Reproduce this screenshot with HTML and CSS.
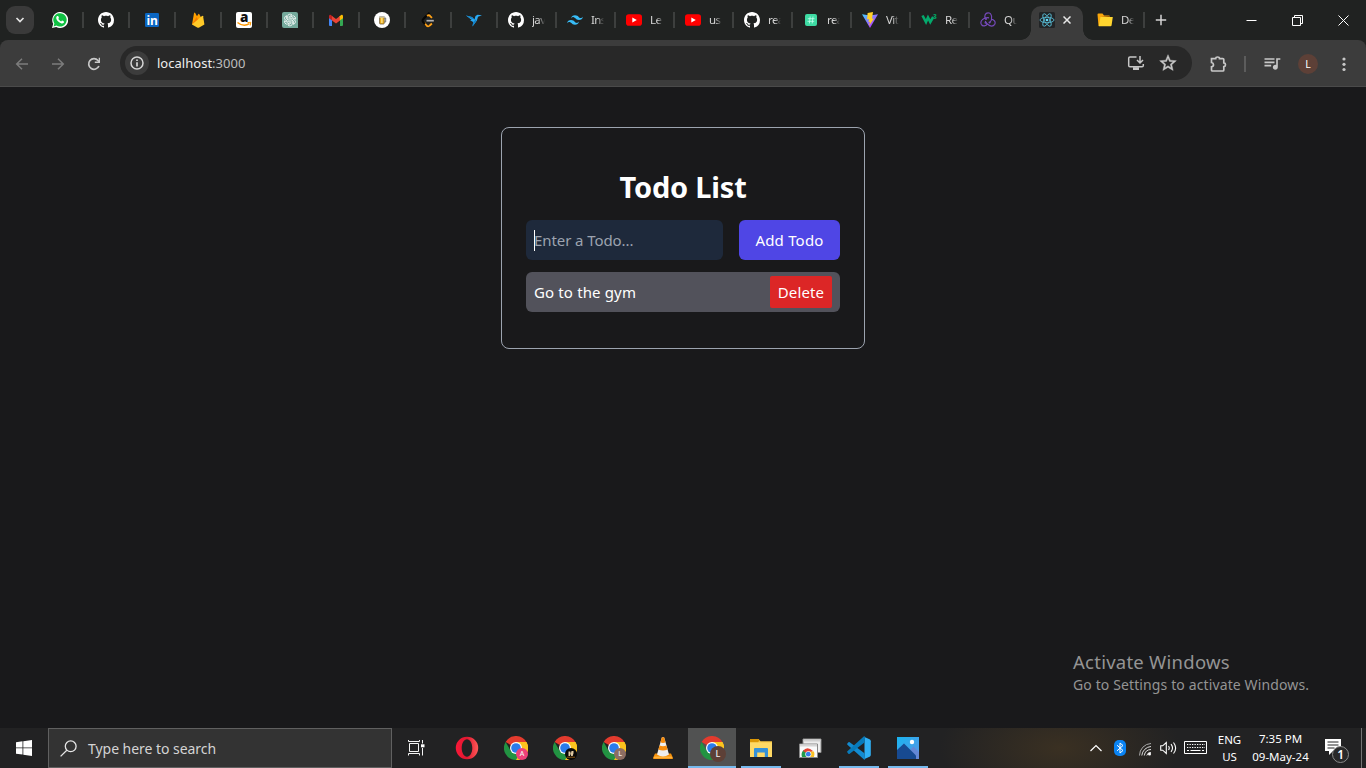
FILE: index.html
```html
<!DOCTYPE html>
<html lang="en">
<head>
<meta charset="utf-8">
<title>Todo List</title>
<link rel="stylesheet" href="styles.css">
</head>
<body>
<svg class="defs" width="0" height="0">
  <symbol id="github" viewBox="0 0 16 16"><path fill="#fff" d="M8 0C3.58 0 0 3.58 0 8c0 3.54 2.29 6.53 5.47 7.59.4.07.55-.17.55-.38 0-.19-.01-.82-.01-1.49-2.01.37-2.53-.49-2.69-.94-.09-.23-.48-.94-.82-1.13-.28-.15-.68-.52-.01-.53.63-.01 1.08.58 1.23.82.72 1.21 1.87.87 2.33.66.07-.52.28-.87.51-1.07-1.78-.2-3.64-.89-3.64-3.95 0-.87.31-1.59.82-2.15-.08-.2-.36-1.02.08-2.12 0 0 .67-.21 2.2.82.64-.18 1.32-.27 2-.27s1.36.09 2 .27c1.53-1.04 2.2-.82 2.2-.82.44 1.1.16 1.92.08 2.12.51.56.82 1.27.82 2.15 0 3.07-1.87 3.75-3.65 3.95.29.25.54.73.54 1.48 0 1.07-.01 1.93-.01 2.2 0 .21.15.46.55.38A8.01 8.01 0 0 0 16 8c0-4.42-3.58-8-8-8z"/></symbol>
  <symbol id="youtube" viewBox="0 0 16 16"><rect y="2.3" width="16" height="11.4" rx="2.8" fill="#f00"/><path d="M6.3 5.4v5.2L10.8 8z" fill="#fff"/></symbol>
  <symbol id="chrome" viewBox="0 0 24 24">
    <path d="M12 12 1.6 6A12 12 0 0 1 22.4 6z" fill="#e33b2e"/>
    <path d="M12 12 22.4 6A12 12 0 0 1 12 24z" fill="#fcc31e"/>
    <path d="M12 6h10.4A12 12 0 0 1 12 24l5.2-9z" fill="#fcc31e"/>
    <path d="M1.6 6 6.8 15 12 18l5.2-3L12 24A12 12 0 0 1 1.6 6z" fill="#229342"/>
    <circle cx="12" cy="12" r="6" fill="#fff"/><circle cx="12" cy="12" r="4.8" fill="#2a7bec"/>
  </symbol>
</svg>

<header class="tabstrip">
  <button class="tab-search"><svg width="10" height="10" viewBox="0 0 10 10"><path d="M1.5 3 5 6.5 8.5 3" fill="none" stroke="#e3e3e3" stroke-width="1.7"/></svg></button>
  <div class="tab"><svg viewBox="0 0 16 16"><path d="M0 16 1.2 11.8A8 8 0 1 1 4.2 14.9z" fill="#fff"/><path d="m1.6 14.4.8-2.8A6.7 6.7 0 1 1 4.5 13.6z" fill="#10c143"/><path d="M5.2 4.1c.4-.3.9-.2 1.1.2l.6 1.4c.1.4-.4.9-.6 1.1.7 1.3 1.6 2.1 2.9 2.7.4-.4.7-1 1.1-.9l1.6.8c.3.2.1.9-.2 1.3-.6.7-1.6.9-2.6.5-2.2-.7-3.8-2.2-4.7-4.2-.4-1.1-.1-2.3.8-2.9z" fill="#fff"/></svg></div>
  <div class="tab"><svg><use href="#github"/></svg></div>
  <div class="tab"><svg viewBox="0 0 16 16"><rect x="1" y="1" width="14" height="14" rx="1.2" fill="#0a66c2"/><text x="2.6" y="12.5" font-size="12" class="glyph in" fill="#fff">in</text></svg></div>
  <div class="tab"><svg viewBox="0 0 16 16"><path d="M2 12.5 4 1.2Q4.5.1 5.2 1L7 4.3 8.2 2.2Q8.8 1.3 9.3 2.2L13 9z" fill="#ffa000"/><path d="M2 12.5 6.5 5 9.5 10z" fill="#f57c00"/><path d="M2 12.5 12 4q.8-.6 1.1.3l1.3 8.2-5.2 3.1q-1 .5-2 0z" fill="#ffca28"/></svg></div>
  <div class="tab"><svg viewBox="0 0 16 16"><rect width="16" height="16" rx="2" fill="#fff"/><text x="4" y="10.2" font-size="13.5" class="glyph" fill="#111">a</text><path d="M1.5 10.5q6 4.8 12 1.2" fill="none" stroke="#f90" stroke-width="1.5"/><path d="m11.5 10.6 3.3-.3-.6 3.2" fill="none" stroke="#f90"/></svg></div>
  <div class="tab"><svg viewBox="0 0 16 16"><path d="M2 0h12a2 2 0 0 1 2 2v14H2a2 2 0 0 1-2-2V2a2 2 0 0 1 2-2z" fill="#74aa9c"/><g fill="none" stroke="#fff" stroke-width=".75"><path id="petal" d="M5.7 6.8V4.1Q5.8 2.2 8 2.1q1.2 0 2 .8L7.2 4.7v3"/><use href="#petal" transform="rotate(60 8 8)"/><use href="#petal" transform="rotate(120 8 8)"/><use href="#petal" transform="rotate(180 8 8)"/><use href="#petal" transform="rotate(240 8 8)"/><use href="#petal" transform="rotate(300 8 8)"/></g></svg></div>
  <div class="tab"><svg viewBox="0 0 16 16"><path d="M1 4v9q0 1 1 1h2V6z" fill="#4285f4"/><path d="M15 4v9q0 1-1 1h-2V6z" fill="#34a853"/><path d="M1 4.2v2L4.2 8.5V4.3L3 3Q1.2 2.2 1 4.2z" fill="#c5221f"/><path d="M4 4 8 7l4-3v4.5l-4 3-4-3z" fill="#ea4335"/><path d="M15 4.2v2l-3.2 2.3V4.3L13 3q1.8-.8 2 1.2z" fill="#fbbc04"/></svg></div>
  <div class="tab"><svg viewBox="0 0 16 16"><circle cx="8" cy="8" r="8" fill="#fff"/><path d="M10.2 6h1.5v4h-1.500" fill="none" stroke="#777"/><rect x="5.600" y="4.500" width="4.600" height="7.500" rx=".7" fill="#f4b41a" stroke="#695b43" stroke-width=".8"/><path d="M5 4.200h6v1.500H5z" fill="#c9c9c0"/><path d="M7.900 6v5" stroke="#fff2b0"/></svg></div>
  <div class="tab"><svg viewBox="0 0 16 16"><path d="m9.500.7-6.300 6.500q-1.400 1.500 0 3L6.500 14" fill="none" stroke="#070707" stroke-width="1.900"/><path d="m6.500 3.800 1.600-.5q1.400-.2 2.300 1l1.600 1.500M4 10.200l2.500 3.300q1.700 1.700 3.300 0l2.100-2" fill="none" stroke="#ffa116" stroke-width="1.800"/><path d="M3.200 7.200 6.800 3.600M3.200 10l1.800 2" stroke="#070707" stroke-width="1.900"/><path d="M6.500 8.700h7.300" stroke="#b3b3b3" stroke-width="1.700"/></svg></div>
  <div class="tab"><svg viewBox="0 0 16 16"><path d="M0 3.500 6 5l2.500 2.500L9.500 4l2-1.200L16 3.200l-4 1.500-1.200 4L6.500 14.500l.7-4.500L4 8.300 5.800 8z" fill="#29aaf4"/><path d="M0 3.500 6 5l2.500 2.500L5 6.500zM7.200 10l3-3-.2 2.500-3.500 5z" fill="#1482c8"/></svg></div>
  <div class="tab wide"><svg><use href="#github"/></svg><span>jav</span></div>
  <div class="tab wide"><svg viewBox="0 0 24 24"><path fill="#38bdf8" d="M12.001 4.800c-3.200 0-5.200 1.600-6 4.800 1.200-1.600 2.600-2.200 4.200-1.800.913.228 1.565.890 2.288 1.624C13.666 10.618 15.027 12 18.001 12c3.200 0 5.200-1.600 6-4.800-1.200 1.600-2.600 2.200-4.200 1.800-.913-.228-1.565-.890-2.288-1.624C16.337 6.182 14.976 4.800 12.001 4.800zm-6 7.200c-3.200 0-5.200 1.600-6 4.800 1.200-1.600 2.600-2.200 4.200-1.800.913.228 1.565.890 2.288 1.624 1.177 1.194 2.538 2.576 5.512 2.576 3.200 0 5.200-1.600 6-4.800-1.200 1.600-2.600 2.200-4.200 1.800-.913-.228-1.565-.890-2.288-1.624C10.337 13.382 8.976 12 6.001 12z"/></svg><span>Ins</span></div>
  <div class="tab wide"><svg><use href="#youtube"/></svg><span>Le</span></div>
  <div class="tab wide"><svg><use href="#youtube"/></svg><span>us</span></div>
  <div class="tab wide"><svg><use href="#github"/></svg><span>rea</span></div>
  <div class="tab wide"><svg viewBox="0 0 16 16"><rect x="2" y="2" width="12" height="12" rx="2" fill="#3edba3"/><path d="m7.200 4.500-.8 7M10 4.500l-.8 7M4.800 6.700h6.700M4.500 9.300h6.700" stroke="#c5fff0" stroke-width=".8" fill="none"/></svg><span>rea</span></div>
  <div class="tab wide"><svg viewBox="0 0 16 16"><defs><linearGradient id="vite" x2="1" y2="1"><stop stop-color="#41d1ff"/><stop offset=".7" stop-color="#a94afe"/><stop offset="1" stop-color="#bd34fe"/></linearGradient></defs><path d="M0 2.300 8 3.500l8-1.200L8 16z" fill="url(#vite)"/><path d="m11 0-5.400 1-.5 6.500 2-.4-.6 3 1.500-.4-1 4L12 6.500l-2 .3z" fill="#ffd028"/></svg><span>Vit</span></div>
  <div class="tab wide"><svg viewBox="0 0 16 16"><path d="M1.500 3.500 5 10l2-4.500L9.300 10l2.900-5" fill="none" stroke="#04aa6d" stroke-width="2.600"/><text x="12" y="7" font-size="6.500" class="glyph" fill="#05995f">3</text></svg><span>Re</span></div>
  <div class="tab wide last"><svg viewBox="0 0 16 16"><g fill="none" stroke="#764abc" stroke-width="1.150"><path id="loop" d="M9.800 10.700C13 7 12 1 8 .8 5.200.8 4 4 5.500 6.300"/><use href="#loop" transform="rotate(120 8 8.500)"/><use href="#loop" transform="rotate(240 8 8.500)"/></g><g fill="#764abc"><circle cx="6" cy="7" r="1"/><circle cx="9.500" cy="10.500" r="1"/><circle cx="5.500" cy="10.800" r="1"/></g></svg><span>Qu</span></div>
  <div class="tab active"><svg viewBox="0 0 16 16"><rect width="16" height="16" rx="1.500" fill="#222426"/><g fill="none" stroke="#58bed8" stroke-width=".85"><ellipse cx="8" cy="8" rx="7" ry="2.700"/><ellipse cx="8" cy="8" rx="7" ry="2.700" transform="rotate(60 8 8)"/><ellipse cx="8" cy="8" rx="7" ry="2.700" transform="rotate(120 8 8)"/></g><circle cx="8" cy="8" r="1.350" fill="#61dafb"/></svg><svg class="close" viewBox="0 0 8 8"><path d="m.5.500 7 7m0-7-7 7" stroke="#e8e8e8" stroke-width="1.500"/></svg></div>
  <div class="tab wide folder"><svg viewBox="0 0 16 16"><path d="M.5 2.500q0-1 1-1h4l1.500 2h5.500V14h-11z" fill="#f9a60b"/><path d="M12.500 4v10h-9l1-9z" fill="#8b5009"/><path d="M3.500 5h12.300l-1.200 8.200q-.1 1-1.100 1H1.800z" fill="#ffd62f"/></svg><span>De</span></div>
  <button class="new-tab"><svg width="12" height="12" viewBox="0 0 12 12"><path d="M6 .8v10.400M.8 6h10.400" stroke="#d4d4d4" stroke-width="1.500"/></svg></button>
  <div class="window-controls">
    <svg width="11" height="11" viewBox="0 0 11 11"><path d="M.5 5.500h10" stroke="#fff"/></svg>
    <svg width="11" height="11" viewBox="0 0 11 11"><path d="M.5 2.500h8v8h-8zM2.500 2.500v-2h8v8h-2" fill="none" stroke="#fff"/></svg>
    <svg width="11" height="11" viewBox="0 0 11 11"><path d="m.5.500 10 10m0-10-10 10" stroke="#fff"/></svg>
  </div>
</header>

<div class="toolbar-frame">
<nav class="toolbar">
  <svg class="nav" viewBox="0 0 16 16"><path d="M14 8H3M8 2.700 2.700 8 8 13.300" fill="none" stroke="#7c7c7c" stroke-width="1.500"/></svg>
  <svg class="nav" viewBox="0 0 16 16"><path d="M2 8h11M8 2.700 13.300 8 8 13.300" fill="none" stroke="#7c7c7c" stroke-width="1.500"/></svg>
  <svg class="nav" viewBox="0 0 16 16"><path d="M12.900 10A5.300 5.300 0 1 1 12 4.500l1.500 1.800" fill="none" stroke="#c9c9c9" stroke-width="1.700"/><path d="M14 1.700v5.200H8.800V5.600h3.900V1.700z" fill="#c9c9c9"/></svg>
  <div class="omnibox">
    <span class="site-info"><svg width="14" height="14" viewBox="0 0 14 14"><circle cx="7" cy="7" r="6" fill="none" stroke="#d6d6d6" stroke-width="1.500"/><path d="M7 6.200v4.200M7 3.400v1.500" stroke="#d6d6d6" stroke-width="1.700"/></svg></span>
    <span class="url">localhost<span>:3000</span></span>
    <svg class="install" viewBox="0 0 18 16"><path d="M9.500 2H3q-1.300 0-1.300 1.300v7.200q0 1.300 1.300 1.300h12q1.300 0 1.300-1.300V9M13 1v6.500M10 5l3 3 3-3" fill="none" stroke="#c7c7c7" stroke-width="1.500"/><path d="M6 12.200h6V15H6z" fill="#c7c7c7"/></svg>
    <svg class="star" viewBox="0 0 24 24"><path fill="#c7c7c7" stroke="#c7c7c7" stroke-width=".5" d="M22 9.240l-7.190-.62L12 2 9.190 8.630 2 9.240l5.460 4.730L5.820 21 12 17.270 18.180 21l-1.630-7.030L22 9.240zM12 15.400l-3.760 2.270 1-4.280-3.320-2.880 4.380-.38L12 6.100l1.710 4.040 4.380.38-3.320 2.880 1 4.280L12 15.400z"/></svg>
  </div>
  <svg class="ext" viewBox="0 0 18 18"><path d="M2.500 3.600h4.200q0-1.600 1.900-1.600t1.900 1.600h3.300q1 0 1 1v3.300q1.700.1 1.700 1.900t-1.700 1.900v3.300q0 1-1 1H3.500q-1 0-1-1v-3.200q2-.2 2-2t-2-2.300z" fill="none" stroke="#c7c7c7" stroke-width="1.700"/></svg>
  <i class="divider"></i>
  <svg class="media" viewBox="0 0 24 24"><path fill="#c7c7c7" d="M15 5H3v2h12V5zm0 4H3v2h12V9zM3 15h8v-2H3v2zM17 5v8.180c-.31-.11-.65-.18-1-.18-1.660 0-3 1.340-3 3s1.340 3 3 3 3-1.340 3-3V7h3V5h-5z"/></svg>
  <span class="avatar">L</span>
  <svg class="more" viewBox="0 0 4 16"><g fill="#c7c7c7"><circle cx="2" cy="3" r="1.600"/><circle cx="2" cy="8.300" r="1.600"/><circle cx="2" cy="13.500" r="1.600"/></g></svg>
</nav>
</div>

<main class="page">
  <section class="card">
    <h1>Todo List</h1>
    <form class="entry">
      <div class="field"><span>Enter a Todo...</span></div>
      <button class="add" type="button"><span>Add Todo</span></button>
    </form>
    <div class="todo"><span class="task">Go to the gym</span><button class="delete"><span>Delete</span></button></div>
  </section>
  <aside class="watermark"><p class="wm-title">Activate Windows</p><p class="wm-text">Go to Settings to activate Windows.</p></aside>
</main>

<footer class="taskbar">
  <div class="start"><svg width="16" height="16" viewBox="0 0 16 16"><path d="M0 2.200 6.500 1.300v6.200H0zM7.300 1.200 16 0v7.500H7.300zM0 8.300h6.500v6.300L0 13.700zM7.300 8.300H16V16l-8.700-1.200z" fill="#fff"/></svg></div>
  <div class="search"><svg width="17" height="17" viewBox="0 0 17 17"><circle cx="10.700" cy="6.300" r="5.400" fill="none" stroke="#e6e6e6" stroke-width="1.300"/><path d="m6.800 10.200-6.200 6.200" stroke="#e6e6e6" stroke-width="1.300"/></svg><span>Type here to search</span></div>
  <div class="taskview"><svg width="17" height="16" viewBox="0 0 17 16"><path d="M1.500 3.500h9v8h-9zM.5 0v1.500h11V0M.5 15.500v-2h11v2M14.500 0v3.500M14.500 8v7.500" fill="none" stroke="#f3f3f3"/><path d="M13 4.300h3.500v3H13z" fill="#fff"/></svg></div>
  <div class="app"><svg viewBox="0 0 24 24"><defs><linearGradient id="opera"><stop stop-color="#fa1838"/><stop offset=".5" stop-color="#df1830"/><stop offset="1" stop-color="#ff5a58"/></linearGradient></defs><path fill="url(#opera)" fill-rule="evenodd" d="M12 .8a11.200 11.200 0 1 1 0 22.400 11.200 11.200 0 0 1 0-22.400zm0 2.500c-2.900 0-5.300 3.900-5.300 8.700s2.400 8.700 5.300 8.700 5.300-3.900 5.300-8.700-2.400-8.700-5.300-8.700z"/></svg></div>
  <div class="app"><svg><use href="#chrome"/></svg><b class="badge pink">A</b></div>
  <div class="app"><svg viewBox="0 0 24 24"><use href="#chrome"/><circle cx="18" cy="18" r="6" fill="#090807"/><path d="M15.500 20v-4.500h1.800l.5 2.500.7-3h2v2.300l-.8 2.700h-1.500l-.8-2.500-.5 2.500z" fill="#e0c9a1"/><path d="M14 21.200h8" stroke="#8b5915"/></svg></div>
  <div class="app"><svg><use href="#chrome"/></svg><b class="badge taupe">L</b></div>
  <div class="app"><svg viewBox="0 0 24 24"><path d="M4 17.500h16l2 4.500q.2 1-1 1H3q-1 0-1-1z" fill="#f4900c"/><path d="M3.500 20.500h17l1 1.800h-19z" fill="#ffb33c"/><path d="M10.800 1.500q1.200-.9 2.400 0L18 18.500q-6 3.800-12 0z" fill="#eee"/><path d="M10.800 1.500q1.200-.9 2.400 0l1.400 4.800q-2.600 1.300-5.200 0zM8.600 9.500q3.400 1.500 6.800 0l1.200 4.100q-4.600 2-9.200 0z" fill="#f58b0c"/></svg></div>
  <div class="app current"><svg><use href="#chrome"/></svg><b class="badge brown">L</b></div>
  <div class="app open"><svg viewBox="0 0 24 24"><path d="M1 3h8.500l2 2.300H23v15.700H1z" fill="#f9c846"/><path d="M1 3h8.500l1 1.500-1.500 1.700H1z" fill="#dc9705"/><path d="M1 6.500h22V21H1z" fill="#ffd965"/><path d="M5 13q0-1 1-1h12q1 0 1 1v8h-3.200v-4.500H8.200V21H5z" fill="#3591d8"/></svg></div>
  <div class="app"><svg viewBox="0 0 24 24"><path d="M5 3h18v13.500H5z" fill="#eee" stroke="#8c8c8c"/><path d="M5.500 3.500h17v2h-17z" fill="#d0d0d0"/><path d="M1.500 8h18v13.500h-18z" fill="#fafafa" stroke="#898989"/><path d="M2 8.500h17v2H2z" fill="#d5d5d5"/><path d="M4 21a6.500 6.500 0 0 1 2-7.200L10 18v3z" fill="#229c4b"/><path d="M5 15q4-5.500 10 0l-5 3z" fill="#e54335"/><path d="M10 15.500h6q1 3 0 5.500h-6z" fill="#fbc023"/><circle cx="10.300" cy="18.200" r="3" fill="#fff"/><circle cx="10.300" cy="18.200" r="2.400" fill="#387eec"/></svg></div>
  <div class="app open"><svg viewBox="0 0 24 24"><path d="m17.500 1 5 2.300q1.300.7 1.300 2v13.400q0 1.400-1.300 2l-5 2.300z" fill="#30b0f4"/><path d="m17.500 17.200-14.800-11q-.7-.4-1.300 0L.4 7.400q-.6.700 0 1.300L17 23.600l1 .2z" fill="#138bd0"/><path d="M17.500 6.500 2.700 17.700q-.7.400-1.300 0L.4 16.500q-.6-.7 0-1.300L17 .3l1 .2z" fill="#087bbb"/></svg></div>
  <div class="app open"><svg viewBox="0 0 24 24"><defs><linearGradient id="photo" x2="1" y2="1"><stop stop-color="#18b5f1"/><stop offset="1" stop-color="#5d94e4"/></linearGradient></defs><path d="M1 1h22v22H1z" fill="url(#photo)"/><circle cx="16" cy="6" r="2.200" fill="#fff"/><path d="m11 17 6.500-6.500L23 16v7H11z" fill="#6487d5"/><path d="M1 14 8 7.500l12 12V23H1z" fill="#174a91"/></svg></div>
  <div class="tray">
    <svg class="chevron" viewBox="0 0 12 8"><path d="m.5 7 5.500-5.500L11.500 7" fill="none" stroke="#fff" stroke-width="1.200"/></svg>
    <svg class="bt" viewBox="0 0 12 16"><rect width="12" height="16" rx="5" fill="#0a84f5"/><path d="m3 5.200 6 5.300-3 2.500V3l3 2.500-6 5.300" fill="none" stroke="#fff"/></svg>
    <svg class="wifi" viewBox="0 0 14 14"><g fill="none" stroke="#ddd"><path d="M1.500 13.500A12 12 0 0 1 13 1.500" stroke="#aaa"/><path d="M3.800 13.500A10 10 0 0 1 13 4.500M6.300 13.500a7 7 0 0 1 6.700-6M8.800 13.500a4 4 0 0 1 4.200-3"/></g><circle cx="11.500" cy="12" r="1.500" fill="#fff"/></svg>
    <svg class="volume" viewBox="0 0 17 14"><path d="M.7 4.800h2L6.300 1.500v11L2.700 9.200h-2zM8.500 5q1.500 2 0 4M11 3.200q3 3.800 0 7.600M13.500 1.500q4.300 5.500 0 11" fill="none" stroke="#fff" stroke-width="1.100"/></svg>
    <svg class="keyboard" viewBox="0 0 23 14"><path d="M.5.500h22v12H.5z" fill="none" stroke="#fff"/><path d="M3 3.500h18M3 6.500h18" stroke="#fff" stroke-dasharray="1.300 1.200"/><path d="M3 9.500h2M6.500 9.500h10M18 9.500h2" stroke="#fff"/></svg>
    <div class="lang"><span>ENG</span><span>US</span></div>
    <div class="clock"><span>7:35 PM</span><span class="date">09-May-24</span></div>
    <svg class="notice" viewBox="0 0 26 26"><path d="M1 1h16v12H9l-4 4v-4H1z" fill="#fff"/><path d="M3.500 4h11M3.500 7h11M3.500 10h7" stroke="#242424"/><circle cx="16.500" cy="16.500" r="8" fill="#292929" stroke="#8a8a8a"/><text x="13.300" y="21" font-size="12" class="num" fill="#fff">1</text></svg>
  </div>
</footer>
</body>
</html>
```
FILE: styles.css
```css
* { box-sizing: border-box; }
body { margin: 0; width: 1366px; height: 768px; overflow: hidden; display: flex; flex-direction: column; background: #19191b; color: #fff; font-family: "Noto Sans", "Open Sans", sans-serif; }
button { border: 0; padding: 0; margin: 0; font: inherit; letter-spacing: inherit; color: inherit; background: none; }
p, h1 { margin: 0; }
svg { display: block; flex: none; }
.defs { position: absolute; }
.glyph { font-family: "Open Sans", sans-serif; font-weight: 800; }
.in { font-weight: 700; letter-spacing: -.3px; }
.num { font-weight: 600; }

.tabstrip { height: 40px; flex: none; display: flex; align-items: center; background: #202221; }
.tab-search { width: 28px; height: 28px; margin: 0 4px 0 6px; border-radius: 9px; background: #3a3a3a; display: grid; place-items: center; }
.tab { width: 46px; height: 16px; display: flex; align-items: center; justify-content: center; border-right: 2px solid #3d3f3e; }
.tab svg { width: 16px; height: 16px; }
.tab.wide { width: 59px; justify-content: flex-start; padding-left: 10px; gap: 8px; }
.tab.wide span { width: 13px; overflow: hidden; white-space: nowrap; font-size: 11.5px; letter-spacing: -.6px; line-height: 18px; color: #d5d5d5; -webkit-mask-image: linear-gradient(90deg, #000 50%, transparent); mask-image: linear-gradient(90deg, #000 50%, transparent); }
.tab.last { border-right-color: transparent; }
.tab.active { position: relative; width: 52px; height: 34px; margin: 6px 0 0 2px; padding: 0 0 6px 8px; gap: 8px; justify-content: flex-start; border: 0; border-radius: 10px 10px 0 0; background: #3c3c3c; }
.tab.active::before, .tab.active::after { content: ""; position: absolute; bottom: 0; width: 10px; height: 10px; }
.tab.active::before { left: -10px; background: radial-gradient(circle at 0 0, transparent 9.5px, #3c3c3c 10px); }
.tab.active::after { right: -10px; background: radial-gradient(circle at 100% 0, transparent 9.5px, #3c3c3c 10px); }
.tab .close { width: 8px; height: 8px; }
.tab.folder { width: 62px; padding-left: 14px; }
.new-tab { width: 32px; height: 28px; display: grid; place-items: center; }
.window-controls { margin-left: auto; display: grid; grid-template-columns: repeat(3, 46px); justify-items: center; }

.toolbar-frame { flex: none; background: #202221; }
.toolbar { height: 47px; display: flex; align-items: center; padding: 0 20px 0 14px; background: #3c3c3c; border-radius: 8px 8px 0 0; box-shadow: inset 0 -1px #4a4a4a; }
.nav { width: 16px; height: 16px; margin-right: 20px; }
.omnibox { width: 1072px; height: 34px; margin: 0 0 1px -2px; border-radius: 17px; background: #282828; display: flex; align-items: center; padding: 0 14px 0 5px; }
.site-info { width: 24px; height: 24px; border-radius: 50%; background: #3c3c3c; display: grid; place-items: center; }
.url { margin-left: 8px; margin-right: auto; font-size: 13px; line-height: 18px; letter-spacing: .02px; color: #eee; }
.url span { color: #bdbdbd; }
.install { width: 18px; height: 16px; margin-right: 13px; }
.star { width: 20px; height: 20px; }
.ext { width: 18px; height: 18px; margin-left: 17px; }
.divider { width: 2px; height: 16px; margin-left: 17px; background: #5c5c5c; }
.media { width: 20px; height: 20px; margin-left: 16px; }
.avatar { width: 20px; height: 20px; margin-left: 16px; border-radius: 50%; background: #5d4037; font-size: 10.5px; line-height: 20px; text-align: center; }
.more { width: 4px; height: 16px; margin-left: 24px; }

.page { flex: 1; display: flex; flex-direction: column; align-items: center; padding-top: 40px; position: relative; }
.card { width: 364px; height: 222px; border: 1px solid #9ca3af; border-radius: 8px; padding: 39px 24px 36px; }
.card h1 { height: 41px; font-size: 29px; line-height: 40px; font-weight: 700; text-align: center; letter-spacing: -.2px; white-space: nowrap; }
.entry { display: flex; gap: 16px; margin: 12px 0; height: 40px; font-size: 15px; letter-spacing: -.08px; }
.field { width: 197px; border-radius: 6px; background: #1e293b; padding: 0 8px; display: flex; align-items: center; color: #9ca3af; }
.field::before { content: ""; width: 1px; height: 21px; margin-right: -1px; background: #fff; }
.add { flex: 1; border-radius: 6px; background: #4f46e5; letter-spacing: .2px; }
.todo { height: 40px; padding: 0 8px; border-radius: 6px; background: #52525b; display: flex; align-items: center; justify-content: space-between; font-size: 15px; letter-spacing: .14px; }
.delete { width: 62px; height: 32px; border-radius: 2px; background: #dc2626; }
.watermark { position: absolute; left: 1073px; bottom: 33px; color: #949494; white-space: nowrap; }
.wm-title { font-size: 18.5px; line-height: 24px; letter-spacing: .25px; }
.wm-text { font-size: 14px; line-height: 21px; letter-spacing: .12px; }

.taskbar { height: 40px; flex: none; display: flex; background: radial-gradient(ellipse 120px 60px at 1060px 20px, #3a3022, transparent), #222223; }
.start { width: 48px; display: grid; place-items: center; }
.search { width: 344px; border: 1px solid #606060; background: #333; display: flex; align-items: center; padding-left: 11px; gap: 11px; font-size: 14px; letter-spacing: -.04px; color: #d4d4d4; }
.taskview { width: 48px; margin-right: 3px; display: grid; place-items: center; }
.app { position: relative; width: 48px; margin-right: 1px; display: grid; place-items: center; }
.app > svg { width: 24px; height: 24px; }
.badge { position: absolute; left: 24px; top: 20px; width: 12px; height: 12px; border-radius: 50%; font-size: 7px; line-height: 12px; text-align: center; font-weight: 500; color: #eee; }
.pink { background: #ec407a; }
.taupe { background: #8d6e63; }
.brown { left: 22px; top: 18px; width: 16px; height: 16px; line-height: 16px; font-size: 9px; background: #5d4037; }
.current { background: #515252; }
.current::after, .open::after { content: ""; position: absolute; bottom: 0; left: 4px; width: 40px; height: 2px; background: #76b9ed; }
.current::after { left: 0; width: 48px; }
.tray { width: 272px; margin-left: auto; display: flex; align-items: center; border-right: 1px solid #747474; margin-right: 4px; font-size: 11.5px; }
.chevron { width: 12px; height: 8px; }
.bt { width: 12px; height: 16px; margin-left: 12px; }
.wifi { width: 14px; height: 14px; margin-left: 12px; margin-top: 2px; }
.volume { width: 17px; height: 14px; margin-left: 8px; }
.keyboard { width: 23px; height: 14px; margin-left: 7px; }
.lang, .clock { display: grid; grid-template-rows: 17px 17px; line-height: 17px; text-align: center; white-space: nowrap; }
.lang { width: 25px; margin-left: 10px; }
.clock { width: 59px; margin-left: 9px; grid-template-rows: 18px 17px; padding-bottom: 1px; }
.notice { width: 26px; height: 26px; margin: 6px 0 0 14px; }
```
